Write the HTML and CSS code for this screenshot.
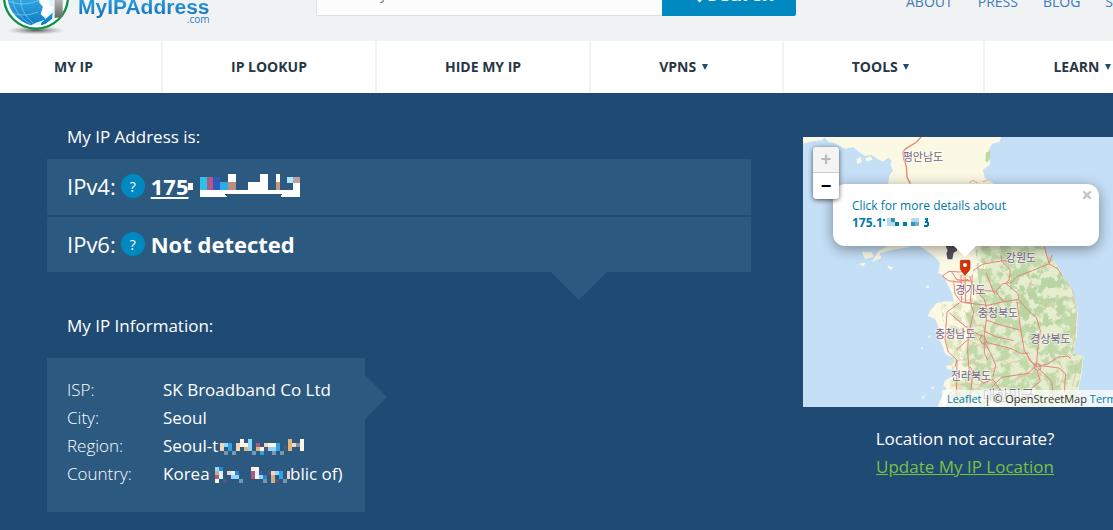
FILE: index.html
```html
<!DOCTYPE html>
<html lang="en">
<head>
    <meta charset="UTF-8">
    <meta name="viewport" content="width=device-width, initial-scale=1.0">
    <title>What Is My IP Address</title>
    <link rel="stylesheet" href="styles.css">
</head>
<body>
    <header class="header">
        <a href="#" class="logo">
            <svg class="globe" width="72" height="72" viewBox="0 0 216 216" aria-hidden="true">
                <defs>
                    <radialGradient id="ground">
                        <stop offset="0" stop-color="#555"/>
                        <stop offset="1" stop-color="#999" stop-opacity="0"/>
                    </radialGradient>
                    <linearGradient id="sea" x1="0" y1="0" x2="0" y2="1">
                        <stop offset="0" stop-color="#3fb4e8"/>
                        <stop offset="1" stop-color="#0c7cc4"/>
                    </linearGradient>
                    <linearGradient id="steel" x1="0" y1="0" x2="0" y2="1">
                        <stop offset="0" stop-color="#ddd"/>
                        <stop offset="1" stop-color="#666"/>
                    </linearGradient>
                </defs>
                <ellipse cx="108" cy="199" rx="88" ry="13" fill="url(#ground)"/>
                <circle cx="108" cy="98" r="96" fill="#fff" stroke="#0b9444" stroke-width="7"/>
                <circle cx="108" cy="98" r="86" fill="#e3f3fb"/>
                <path d="M22 92c0 40 26 78 70 92l16-8 30-10-16-16 8-26-12-16-4-30H22zM124 176l34-30-2 18-20 16-14 4z" fill="url(#sea)"/>
                <path d="M28 112c30 12 60 10 90-4M42 148c20 8 46 6 72-4M62 84c-4 40 8 70 38 94M38 84c-6 40 18 76 54 96" fill="none" stroke="#8fd0ee" stroke-width="2"/>
                <path d="M118 92l30 0 0 32 14 6-22 28-16-6 6-22-12-14z" fill="#fff"/>
                <path d="M164 80h24v78l-24 4z" fill="url(#steel)"/>
            </svg>
            <span class="logo-text">
                <span class="logo-name">MyIPAddress</span>
                <span class="logo-com">.com</span>
            </span>
        </a>

        <form class="search">
            <input type="text" aria-label="Search" placeholder="Enter Keywords or IP Address...">
            <button type="button">
                <svg width="20" height="20" viewBox="0 0 20 20" aria-hidden="true">
                    <circle cx="8" cy="8" r="6" fill="none" stroke="#fff" stroke-width="3"/>
                    <path d="M12 12l6 6" stroke="#fff" stroke-width="4"/>
                </svg>
                Search
            </button>
        </form>

        <div class="top-links">
            <a href="#">ABOUT</a>
            <a href="#">PRESS</a>
            <a href="#">BLOG</a>
            <a href="#">SUPPORT</a>
        </div>
    </header>

    <nav class="nav">
        <a href="#">MY IP</a>
        <a href="#">IP LOOKUP</a>
        <a href="#">HIDE MY IP</a>
        <a href="#">VPNS <span class="arrow"></span></a>
        <a href="#">TOOLS <span class="arrow"></span></a>
        <a href="#">LEARN <span class="arrow"></span></a>
    </nav>

    <main class="content">
        <section class="details">
            <h2>My IP Address is:</h2>
            <div class="ip-list">
                <div class="ip-row">
                    <span>IPv4:</span>
                    <button type="button" class="help">?</button>
                    <a href="#" class="ip">175</a>
                    <svg class="ip-mask" width="114" height="26" viewBox="445 160 342 78" shape-rendering="crispEdges" aria-hidden="true">
                        <path d="M441 189h18v21h-18zM480 210h300v21h-57l6-9h-174l6 9h-81zM564 162h24v24h-24zM624 186h36v-24h24v48h-60zM708 162h12v24h-12zM759 189h21v21h-21z" fill="#fff"/>
                        <path d="M480 171h21v39h-21z" fill="#2fc1eb"/>
                        <path d="M501 171h18v39h-18z" fill="#b15b84"/>
                        <path d="M519 171h21v39h-21z" fill="#2e5cbb"/>
                        <path d="M540 186h24v24h-24z" fill="#2eabe5"/>
                        <path d="M564 186h24v24h-24z" fill="#b88e83"/>
                        <path d="M708 186h12v24h-12z" fill="#c9977b"/>
                        <path d="M741 171h18v18h-18z" fill="#afe4ff"/>
                        <path d="M759 171h21v18h-21z" fill="#b9a19c"/>
                    </svg>
                </div>
                <div class="ip-row">
                    <span>IPv6:</span>
                    <button type="button" class="help">?</button>
                    <strong>Not detected</strong>
                </div>
            </div>

            <h2>My IP Information:</h2>
            <table class="info">
                <tr><th scope="row">ISP:</th><td>SK Broadband Co Ltd</td></tr>
                <tr><th scope="row">City:</th><td>Seoul</td></tr>
                <tr>
                    <th scope="row">Region:</th>
                    <td>Seoul-t<svg class="mask" width="88" height="18" viewBox="534 382 264 54" shape-rendering="crispEdges" aria-hidden="true">
                        <path d="M540 396h12v24h-12zM588 396h12v24h-12zM672 396h12v12h-12zM756 396h12v12h-12z" fill="#f4d5b9"/>
                        <path d="M552 396h12v12h-12zM624 384h12v36h-12zM684 408h24v12h-24z" fill="#8ed6fb"/>
                        <path d="M564 396h12v24h-12zM708 396h12v24h-12zM660 420h12v12h-12z" fill="#2ea3e2"/>
                        <path d="M600 384h12v24h-12zM612 396h12v12h-12zM684 396h24v12h-24zM780 384h12v36h-12zM660 408h12v12h-12z" fill="#fff5e2"/>
                        <path d="M648 396h12v12h-12z" fill="#b05a80"/>
                        <path d="M648 408h12v12h-12zM744 384h12v36h-12zM612 408h12v12h-12z" fill="#dcb87c"/>
                        <path d="M552 420h12v12h-12zM576 420h12v12h-12zM636 420h12v12h-12zM696 420h12v12h-12zM720 420h12v12h-12zM768 396h12v12h-12z" fill="#7896ad"/>
                        <path d="M672 408h12v12h-12zM732 405h9v15h-9z" fill="#51567f"/>
                    </svg></td>
                </tr>
                <tr>
                    <th scope="row">Country:</th>
                    <td>Korea <svg class="mask" width="76" height="18" viewBox="524 466 228 54" shape-rendering="crispEdges" aria-hidden="true">
                        <path d="M528 468h12v12h-12zM576 492h24v12h-24zM660 492h12v12h-12zM708 480h12v12h-12z" fill="#8ed6fb"/>
                        <path d="M540 468h12v12h-12zM588 480h12v12h-12zM672 492h12v12h-12z" fill="#2d83cc"/>
                        <path d="M528 492h12v12h-12zM636 480h12v24h-12z" fill="#b05a80"/>
                        <path d="M540 480h12v24h-12zM576 480h12v12h-12zM648 480h12v12h-12z" fill="#d9f3ff"/>
                        <path d="M636 468h24v12h-24zM648 492h12v12h-12zM528 504h12v12h-12z" fill="#fff5e2"/>
                        <path d="M564 480h12v12h-12zM696 480h12v12h-12zM744 480h8v24h-8z" fill="#f4d5b9"/>
                        <path d="M528 480h12v12h-12zM696 492h12v24h-12z" fill="#d2ad7d"/>
                        <path d="M720 480h12v24h-12z" fill="#2ea3e2"/>
                        <path d="M660 480h12v12h-12z" fill="#2e5cbb"/>
                        <path d="M600 504h12v12h-12zM672 504h12v12h-12zM732 504h12v12h-12z" fill="#7896ad"/>
                        <path d="M552 504h12v12h-12zM684 480h12v12h-12zM708 504h12v12h-12z" fill="#51567f"/>
                    </svg>blic of)</td>
                </tr>
            </table>
        </section>

        <section class="location">
            <div class="map">
                <svg class="map-tiles" viewBox="0 0 972 810" preserveAspectRatio="xMidYMid slice" aria-hidden="true">
                    <defs>
                        <filter id="terrain" x="0" y="0" width="1" height="1">
                            <feTurbulence type="fractalNoise" baseFrequency="0.035" numOctaves="5" seed="4"/>
                            <feColorMatrix values="0 0 0 0 0  0 0 0 0 0  0 0 0 0 0  7 0 0 0 -3"/>
                            <feComposite in="SourceGraphic" operator="in"/>
                        </filter>
                    </defs>
                    <!-- north -->
                    <path d="M64 0L76 14 96 18 112 28 126 36 150 30 168 44 186 56 206 54 224 66 240 74 256 62 266 70 262 84 270 100 258 118 254 160H600L560 132 545 122 540 98 562 82 556 40 568 20 590 14 594 0z" fill="#fbf9e4"/>
                    <path d="M0 20l20-6 36-4 10-10H0zM160 66l14-6 2 14-12 8zM186 64l18-6 4 10-16 6z" fill="#fbf9e4"/>
                    <path d="M549 46l14-4-2 22-8 14-6-8z" fill="#bddaa4"/>
                    <path d="M354 0l-14 16-30 18-10 10 2 20 8 24 2 32 10 20" fill="none" stroke="#e8827b" stroke-width="4"/>
                    <path d="M498 138l12-8 14 8M540 134l16-6" fill="none" stroke="#f3b08d" stroke-width="3"/>

                    <!-- south -->
                    <g transform="translate(336 309)">
                        <path d="M-160 36l30 0 6 14-26 6zM-130 66L-100 54-106 40-70 30-20 22 0 8 60 50 75 70 70 98 88 110 96 130 110 158 118 185 92 184 64 190 46 212 38 228 60 236 70 260 74 300 84 320 92 344 118 354 112 374 92 378 98 388 122 390 110 410 90 422 84 436 95 444 76 480 66 504H486L492 440 500 400 506 348 480 346 474 330 484 300 488 220 480 180 466 140 442 106 426 74 402 48 370 0H60L0 0-60 6-110 34z" fill="#fbf9e4"/>
                        <path d="M-170 72l22-4-6 10zM-84 78l20 4-10 8zM30 142l10-8 2 10zM48 206l8 2-6 8zM36 290l12-4-4 8zM20 320l6 6-8 2zM46 444l12-6-4 10zM20 470l12-4-8 12z" fill="#fbf9e4"/>
                        <path d="M190 0H370L402 48 426 74 442 106 466 140 480 180 486 220 482 300 474 340 504 350 498 400 490 440 484 504H96l40-66 30-60-30-30 30-60-20-60 40-30-10-80 40-30-20-30z" fill="#e6edce"/>
                        <path filter="url(#terrain)" d="M180 0H370L402 48 426 74 442 106 466 140 480 180 486 220 482 300 474 340 504 350 498 400 490 440 484 504H90l36-66 20-90 30-60-30-80 50-60-10-60z" fill="#c0d9a9"/>
                        <path filter="url(#terrain)" d="M260 90l120 0 60 10 20 60-20 80-40 40-80-20-50-60-20-60z" fill="#b9d5a3"/>
                        <path filter="url(#terrain)" d="M76 190h64v270H94l20-60-20-90z" fill="#dbe5bc"/>

                        <g fill="none" stroke="#f0b495" stroke-width="2">
                            <path d="M130 170l24 12 20-6M146 212l20 20 30-10M120 280l30-20 50-4 20 24M160 300l40 20M130 360l30 0M170 368l34 4 20 16 24-6M250 350l30 20 34-8M380 190l30 6 20 20M330 100l20 20-10 30M452 120l20 30 12 60-4 70-8 50M440 330l30 20M110 436l60-6 30 8M280 330l30-20"/>
                            <path d="M130 104l40 6M118 116l60 10M142 90l6 50M128 128l50-4M210 60l-10 40M430 360l18 40-14 40M300 420l40-20 60 10M484 360l-2 40-10 40"/>
                        </g>

                        <g fill="none" stroke="#e5837c" stroke-width="3" stroke-linejoin="round">
                            <path d="M174 92l30-20 60-10 24 4M258 46l2 18 26 26-4 30-10 10 36 30 4 18-50 8-44 10-70-8"/>
                            <path d="M284 132l24-24 44-16 38-16 12-4 10-28M402 72l26 14 12 20M388 20l14 50"/>
                            <path d="M164 110l14 38 30 30 8 32-2 30-6 40 0 60 10 20"/>
                            <path d="M172 104l-6 84 10 28-16 70-2 50 4 50 10 24-10 90"/>
                            <path d="M214 100l20 52 6 10M184 150l58 4 20-22 20-4M242 154l24 34"/>
                            <path d="M82 108l20-14 34 2 16-6M82 108l18 14 30 4 30-8M110 96l16 24 40 2M116 122l4 40 18 24 26 2M138 106l2 80M150 110l2 76"/>
                            <path d="M134 188l-38 28-6 84 10 36 26 24-2 110M102 218l60 50 40 22M124 330l40-36M126 360l-6 20"/>
                            <path d="M312 180l26 30 26 22 12 40-8 60-4 50M306 186l10 76 12 70 32 48"/>
                            <path d="M214 240l40 14 60 16M208 274l34 16 54 12M208 306l50 12 30 8 30 14 20 0"/>
                            <path d="M212 312l16 30 14 34-8 34M368 380l30-8 30-20 30-4 10 8M372 376l60 8 20 18-4 56"/>
                            <path d="M360 380l-20 20-80 12-30 30M164 380l40 50 30-12 26 40M366 390l10 34-26 20-10 30M370 384l40 40 4 40M334 338l10 24 22 16M96 470l20-20 20 16"/>
                            <path d="M200 284l10 8 6 16-14 4-8-14z"/>
                            <circle cx="368" cy="381" r="10"/>
                        </g>
                        <path d="M92 18h34v14l-10 6-4 20-14 0-4-18 4-8z" fill="#564f60"/>

                        <g class="map-labels">
                            <text x="318" y="65">강원도</text>
                            <text x="166" y="161">경기도</text>
                            <text x="249" y="231">충청북도</text>
                            <text x="121" y="295">충청남도</text>
                            <text x="406" y="308">경상북도</text>
                            <text x="168" y="420">전라북도</text>
                            <text class="country" x="280" y="481">대한민국</text>
                        </g>

                        <path d="M136 64q0-3 3-3h23q3 0 3 3v21q0 4-4 8l-11 13-10-13q-4-4-4-8z" fill="#d63306" stroke="#96290b" stroke-width="2"/>
                        <circle cx="150" cy="75" r="6" fill="#fff"/>
                    </g>
                    <g class="map-labels">
                        <text x="360" y="72">평안남도</text>
                    </g>
                </svg>

                <div class="popup">
                    <a href="#">Click for more details about<br>
                        <b>175.1<svg class="popup-mask" width="46" height="10" viewBox="252 263 138 30" shape-rendering="crispEdges" aria-hidden="true">
                            <path d="M252 266h6v6h-6zM288 275h12v12h-12zM312 275h12v12h-12zM378 263h9v6h-9zM381 269h6v6h-6zM378 272h9v5h-9zM384 275h6v12h-6zM375 285h12v6h-12z" fill="#0078a8"/>
                            <path d="M264 263h24v24h-24zM336 263h24v12h-24z" fill="#b4dbe9"/>
                            <path d="M276 263h12v12h-12zM336 275h12v12h-12z" fill="#3593b9"/>
                            <path d="M348 275h12v12h-12z" fill="#70b5d0"/>
                        </svg></b>
                    </a>
                    <button type="button" class="popup-close" aria-label="Close">×</button>
                </div>

                <div class="zoom">
                    <button type="button" class="disabled">+</button>
                    <button type="button">−</button>
                </div>

                <div class="attribution"><a href="#">Leaflet</a> | © OpenStreetMap <a href="#">Terms</a></div>
            </div>
            <p>Location not accurate?<br><a href="#">Update My IP Location</a></p>
        </section>
    </main>
</body>
</html>
```

FILE: styles.css
```css
body {
    font-family: "Open Sans", "Noto Sans CJK KR", sans-serif;
    margin: 0;
    color: white;
    background-color: #1f4a73;
    overflow: hidden;
}

button {
    font-family: inherit;
    border: none;
    padding: 0;
}

/* Header */
.header {
    display: flex;
    align-items: flex-end;
    height: 41px;
    background-color: #f1f2f4;
    overflow: hidden;
}

.logo {
    display: flex;
    align-items: flex-end;
    flex: none;
    width: 316px;
    text-decoration: none;
}

.globe {
    flex: none;
    margin-bottom: 5px;
}

.logo-text {
    display: flex;
    flex-direction: column;
    margin: 0 0 20px 6px;
}

.logo-name {
    padding-bottom: 3px;
    font-family: "Liberation Sans", sans-serif;
    font-size: 21px;
    font-weight: bold;
    line-height: 20px;
    color: transparent;
    background: linear-gradient(#2ba6e0, #1267b5);
    background-clip: text;
    -webkit-background-clip: text;
}

.logo-com {
    margin-top: -3px;
    font-size: 10px;
    line-height: 4px;
    text-align: right;
    color: #1c7fc4;
}

.search {
    display: flex;
    flex: none;
    width: 480px;
    margin-bottom: 25px;
}

.search input {
    flex: 1;
    min-width: 0;
    height: 44px;
    box-sizing: border-box;
    padding: 0 8px 2px;
    font-family: inherit;
    font-size: 14px;
    background-color: #fcfcfc;
    border: 1px solid #e0e0e0;
    border-right: none;
}

.search button {
    display: flex;
    align-items: center;
    justify-content: center;
    gap: 4px;
    width: 134px;
    height: 44px;
    padding-bottom: 2px;
    color: white;
    font-size: 20px;
    font-weight: bold;
    background-color: #0088c1;
    border-radius: 0 2px 2px 0;
}

.top-links {
    display: flex;
    flex: none;
    gap: 25px;
    margin: 0 0 29px 110px;
    font-size: 14px;
    line-height: 20px;
}

.top-links a {
    color: #3a7abd;
    text-decoration: none;
}

/* Navigation */
.nav {
    display: flex;
    margin-left: -14px;
    background-color: white;
    overflow: hidden;
}

.nav a {
    flex: none;
    padding: 0 68px;
    border-right: 2px solid #f1f2f4;
    color: #263746;
    font-size: 14px;
    font-weight: bold;
    line-height: 52px;
    text-decoration: none;
}

.arrow {
    display: inline-block;
    margin: 0 6px 0 2px;
    vertical-align: 2px;
    border: 3px solid transparent;
    border-top: 6px solid #1f4a73;
    border-bottom: none;
}

/* Main content */
.content {
    display: grid;
    grid-template-columns: minmax(0, 1fr) 324px;
    gap: 52px;
    margin-right: -14px;
    padding: 30px 0 18px 47px;
}

h2 {
    margin: 0 0 8px;
    padding-left: 20px;
    font-size: 17px;
    font-weight: normal;
    line-height: 28px;
}

.ip-list {
    position: relative;
    display: flex;
    flex-direction: column;
    gap: 2px;
    margin-bottom: 40px;
}

.ip-list::after {
    content: "";
    position: absolute;
    top: 100%;
    right: 144px;
    border: 28px solid transparent;
    border-top-color: #2c5980;
    border-bottom: none;
}

.ip-row {
    display: flex;
    align-items: center;
    padding: 12px 20px 13px;
    font-size: 22px;
    line-height: 30px;
    background-color: #2c5980;
}

.ip-row:first-child {
    padding-bottom: 14px;
}

.ip {
    color: white;
    font-weight: bold;
}

.help {
    width: 24px;
    height: 24px;
    margin: 0 6px 0 5px;
    border-radius: 50%;
    color: white;
    font-size: 14px;
    background-color: #0088c1;
}

.info {
    position: relative;
    width: 318px;
    margin-top: 18px;
    padding: 18px 20px 24px;
    border-spacing: 0;
    font-size: 17px;
    line-height: 28px;
    background-color: #2c5980;
}

.info::after {
    content: "";
    position: absolute;
    top: 17px;
    left: 100%;
    border: 22px solid transparent;
    border-left-color: #2c5980;
    border-right: none;
}

.info th {
    width: 96px;
    padding: 0;
    font-weight: 300;
    text-align: left;
}

.info td {
    padding: 0;
    white-space: nowrap;
}

.mask {
    vertical-align: -4px;
}

/* Map */
.location {
    padding-top: 14px;
}

.location p {
    margin: 18px 0 0;
    font-size: 17px;
    line-height: 28px;
    text-align: center;
}

.location p a {
    color: #7ac142;
}

.map {
    position: relative;
    height: 270px;
    background-color: #c5dff6;
    overflow: hidden;
}

.map-tiles {
    display: block;
    width: 100%;
    height: 100%;
}

.map-labels {
    font-family: "Noto Sans CJK KR", sans-serif;
    font-size: 33px;
    fill: #75637f;
    stroke: rgba(255, 255, 255, 0.6);
    stroke-width: 5px;
    paint-order: stroke;
    text-anchor: middle;
}

.map-labels .country {
    font-size: 42px;
}

.popup {
    position: absolute;
    top: 47px;
    left: 30px;
    width: 266px;
    height: 62px;
    box-sizing: border-box;
    padding: 13px 19px;
    border-radius: 12px;
    font-size: 12px;
    line-height: 17px;
    background-color: white;
    box-shadow: 0 3px 14px rgba(0, 0, 0, 0.4);
}

.popup::after {
    content: "";
    position: absolute;
    top: 100%;
    left: 121px;
    border: 11px solid transparent;
    border-top-color: white;
    border-bottom: none;
}

.popup a,
.attribution a {
    color: #0078a8;
    text-decoration: none;
}

.popup-mask {
    vertical-align: -1px;
}

.popup-close {
    position: absolute;
    top: 2px;
    right: 4px;
    width: 16px;
    color: #c3c3c3;
    font-size: 20px;
    font-weight: bold;
    line-height: 18px;
    background: none;
}

.zoom {
    position: absolute;
    top: 10px;
    left: 10px;
    width: 26px;
    border-radius: 4px;
    background-color: white;
    box-shadow: 0 1px 5px rgba(0, 0, 0, 0.65);
    overflow: hidden;
}

.zoom button {
    display: block;
    width: 26px;
    height: 26px;
    color: black;
    font-family: "Liberation Sans", sans-serif;
    font-size: 18px;
    font-weight: bold;
    background-color: white;
}

.zoom .disabled {
    color: #bbb;
    background-color: #f4f4f4;
    border-bottom: 1px solid #ccc;
}

.attribution {
    position: absolute;
    right: 0;
    bottom: 0;
    padding: 0 5px;
    color: #333;
    font-size: 11px;
    line-height: 17px;
    background-color: rgba(255, 255, 255, 0.7);
}
```
